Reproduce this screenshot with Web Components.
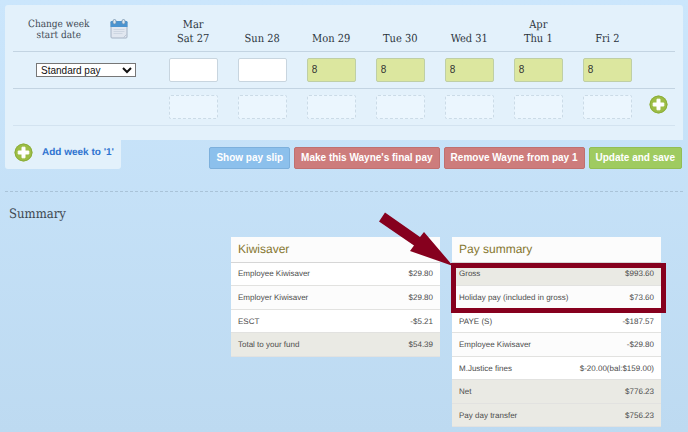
<!DOCTYPE html>
<html lang="en">
<head>
<meta charset="utf-8">
<title>Pay</title>
<style>
  html {
    min-height: 100%;
    background: linear-gradient(#cbe6fc, #bddaf1);
  }

  body {
    margin: 0;
    padding: 5px 5px 0;
    font-family: "Liberation Sans", Arial, sans-serif;
    color: #444;
    text-rendering: geometricPrecision;
  }
</style>
</head>
<body>
<pay-timesheet></pay-timesheet>
<pay-actions>
  <add-week slot="start" label="Add week to '1'"></add-week>
  <pay-button kind="blue">Show pay slip</pay-button>
  <pay-button kind="red">Make this Wayne's final pay</pay-button>
  <pay-button kind="red">Remove Wayne from pay 1</pay-button>
  <pay-button kind="green">Update and save</pay-button>
</pay-actions>
<pay-section heading="Summary">
  <summary-card id="kiwisaver" heading="Kiwisaver"></summary-card>
  <summary-card id="paysummary" heading="Pay summary">
    <call-out slot="note"></call-out>
  </summary-card>
</pay-section>

<script>
class PlusIcon extends HTMLElement {
  constructor() {
    super();
    this.attachShadow({ mode: "open" });
    this.shadowRoot.innerHTML = `
      <style>
        :host { display: block; width: 19px; height: 19px; }
        svg { display: block; width: 100%; height: 100%; }
      </style>
      <svg viewBox="0 0 19 19" aria-hidden="true">
        <circle cx="9.5" cy="9.5" r="9" fill="#9dbd45"/>
        <circle cx="9.5" cy="9.5" r="8.4" fill="none" stroke="#8bae3c" stroke-width="1"/>
        <path d="M8 4.2h3v3.8h3.8v3H11v3.8H8V11H4.2V8H8z" fill="#fff" stroke="#fff" stroke-width="1" stroke-linejoin="round"/>
      </svg>
    `;
  }
}

customElements.define("plus-icon", PlusIcon);

class CalendarIcon extends HTMLElement {
  constructor() {
    super();
    this.attachShadow({ mode: "open" });
    this.shadowRoot.innerHTML = `
      <style>
        :host { display: block; width: 18px; height: 20px; }
        svg { display: block; }
      </style>
      <svg width="18" height="20" viewBox="0 0 18 20" aria-hidden="true">
        <rect x="1" y="2.5" width="16" height="16.5" rx="1" fill="#e1e7f0" stroke="#a5b2c4"/>
        <path d="M.5 8V3.2q0-1.2 1.2-1.2h14.6q1.2 0 1.2 1.2V8z" fill="#4b93cf"/>
        <path d="M3.500 10.500h11M3.500 12.500h11M3.500 14.500h9" stroke="#cdd6e2" stroke-width="1"/>
        <path d="M13.500 18.500l3-3" stroke="#b4c0d0" stroke-width=".8"/>
        <rect x="3" y=".5" width="3" height="4.500" rx="1.500" fill="#dce8f2" stroke="#7390ab" stroke-width=".8"/>
        <rect x="12" y=".5" width="3" height="4.500" rx="1.500" fill="#dce8f2" stroke="#7390ab" stroke-width=".8"/>
      </svg>
    `;
  }
}

customElements.define("calendar-icon", CalendarIcon);

class PayTimesheet extends HTMLElement {
  constructor() {
    super();
    this.attachShadow({ mode: "open" });

    const days = [
      { month: "Mar", day: "Sat 27", hours: "" },
      { month: "", day: "Sun 28", hours: "" },
      { month: "", day: "Mon 29", hours: "8" },
      { month: "", day: "Tue 30", hours: "8" },
      { month: "", day: "Wed 31", hours: "8" },
      { month: "Apr", day: "Thu 1", hours: "8" },
      { month: "", day: "Fri 2", hours: "8" }
    ];

    this.shadowRoot.innerHTML = `
      <style>
        :host {
          display: block;
          padding: 0 8px 14px;
          background: #e3f1fb;
          border-radius: 3px 3px 0 0;
        }

        table {
          width: 100%;
          border-collapse: collapse;
          table-layout: fixed;
        }

        th, td {
          padding: 0;
          border-bottom: 1px solid #c3d4e2;
          text-align: center;
        }

        tr.last td { border-bottom-color: #d3e3f0; }
        thead tr { height: 46px; }
        tbody tr { height: 37px; }
        .first { width: 22%; }
        .last-col { width: 5%; }

        th {
          font: 11px/14px "DejaVu Serif Condensed", "DejaVu Serif", serif;
          color: #2b343c;
          vertical-align: bottom;
        }

        th.day { padding-bottom: 5px; }

        .change {
          display: flex;
          align-items: flex-start;
          gap: 20px;
          padding: 0 0 10px 15px;
          color: #3e4a54;
          font-size: 10px;
          line-height: 11px;
        }

        select {
          display: block;
          width: 100px;
          height: 14px;
          margin-left: 23px;
          padding: 0;
          border: 1px solid #767676;
          border-radius: 0;
          background: #fff;
          color: #111;
          font: 10px "Liberation Sans", Arial, sans-serif;
        }

        input {
          display: block;
          box-sizing: border-box;
          width: 49px;
          height: 24px;
          margin: 0 auto;
          padding: 0 4px;
          border: 1px solid #c8d5df;
          border-radius: 2px;
          background: #fff;
          color: #333;
          font: 10px "Liberation Sans", Arial, sans-serif;
        }

        input.filled {
          background: #dce79f;
          border-color: #bfcfa5;
        }

        input.spare {
          background: #ebf6fe;
          border: 1px dashed #cbdbe7;
        }

        button {
          display: block;
          margin: 0 auto;
          padding: 0 0 4px;
          border: 0;
          background: none;
        }
      </style>
      <table>
        <thead>
          <tr>
            <th class="first">
              <div class="change"><span>Change week<br>start date</span><calendar-icon></calendar-icon></div>
            </th>
            ${days.map(d => `<th class="day">${d.month ? d.month + "<br>" : ""}${d.day}</th>`).join("")}
            <th class="last-col"></th>
          </tr>
        </thead>
        <tbody>
          <tr>
            <td><select aria-label="Pay type"><option>Standard pay</option></select></td>
            ${days.map(d => `<td><input type="text" aria-label="${d.day} hours" value="${d.hours}" class="${d.hours ? "filled" : ""}"></td>`).join("")}
            <td></td>
          </tr>
          <tr class="last">
            <td></td>
            ${days.map(d => `<td><input type="text" aria-label="${d.day} extra" class="spare"></td>`).join("")}
            <td><button type="button" aria-label="Add row"><plus-icon></plus-icon></button></td>
          </tr>
        </tbody>
      </table>
    `;
  }
}

customElements.define("pay-timesheet", PayTimesheet);

class PayActions extends HTMLElement {
  constructor() {
    super();
    this.attachShadow({ mode: "open" });
    this.shadowRoot.innerHTML = `
      <style>
        :host {
          display: flex;
          justify-content: space-between;
          align-items: flex-end;
          padding-bottom: 22px;
          border-bottom: 1px dashed #a9c3d8;
        }

        .buttons {
          display: flex;
          gap: 4px;
          padding-right: 1px;
        }
      </style>
      <slot name="start"></slot>
      <div class="buttons"><slot></slot></div>
    `;
  }
}

customElements.define("pay-actions", PayActions);

class AddWeek extends HTMLElement {
  constructor() {
    super();
    this.attachShadow({ mode: "open" });
    this.shadowRoot.innerHTML = `
      <style>
        :host {
          display: block;
          background: #e3f1fb;
          border-radius: 0 0 3px 3px;
        }

        a {
          display: flex;
          align-items: center;
          gap: 9px;
          padding: 3px 7px 6px 9px;
          color: #2f74d0;
          font-size: 10px;
          font-weight: bold;
          line-height: 20px;
          text-decoration: none;
        }
      </style>
      <a href="#"><plus-icon></plus-icon><span></span></a>
    `;
  }

  connectedCallback() {
    this.shadowRoot.querySelector("span").textContent = this.getAttribute("label");
  }
}

customElements.define("add-week", AddWeek);

class PayButton extends HTMLElement {
  constructor() {
    super();
    this.attachShadow({ mode: "open" });
    this.shadowRoot.innerHTML = `
      <style>
        :host {
          display: block;
          --fill: #8cc0ec;
          --edge: #7db0dc;
        }

        :host([kind="red"]) { --fill: #cd7c7c; --edge: #bf7070; }
        :host([kind="green"]) { --fill: #9fcb60; --edge: #92be54; }

        button {
          display: block;
          height: 22px;
          padding: 0 6px;
          border: 1px solid var(--edge);
          border-radius: 2px;
          background: var(--fill);
          color: #fff;
          font: bold 10px "Liberation Sans", Arial, sans-serif;
          white-space: nowrap;
        }
      </style>
      <button type="button"><slot></slot></button>
    `;
  }
}

customElements.define("pay-button", PayButton);

class PaySection extends HTMLElement {
  constructor() {
    super();
    this.attachShadow({ mode: "open" });
    this.shadowRoot.innerHTML = `
      <style>
        :host { display: block; }

        h2 {
          margin: 0;
          padding: 14px 4px;
          color: #3e4850;
          font: 13px/17px "DejaVu Serif Condensed", "DejaVu Serif", serif;
        }

        .cards {
          display: flex;
          justify-content: flex-end;
          align-items: flex-start;
          gap: 12px;
          padding: 0 22px 6px 0;
        }
      </style>
      <h2></h2>
      <div class="cards"><slot></slot></div>
    `;
  }

  connectedCallback() {
    this.shadowRoot.querySelector("h2").textContent = this.getAttribute("heading");
  }
}

customElements.define("pay-section", PaySection);

class SummaryCard extends HTMLElement {
  constructor() {
    super();
    this.attachShadow({ mode: "open" });
    this.shadowRoot.innerHTML = `
      <style>
        :host {
          display: block;
          position: relative;
          width: 209px;
          background: #fff;
        }

        h3 {
          margin: 0;
          padding: 0 7px;
          border-bottom: 1px solid #d6d6d6;
          background: #fcfcfc;
          color: #86772f;
          font-size: 12px;
          font-weight: normal;
          line-height: 25px;
        }

        table {
          width: 100%;
          border-collapse: collapse;
          color: #4c4c4c;
          font-size: 8px;
        }

        tr { height: 23px; }
        tr:nth-child(even) { height: 24px; background: #fcfcfc; }
        tr.total, tr.total:nth-child(even) { background: #eaeae4; }

        th, td {
          border-bottom: 1px solid #e2e2e0;
          font-weight: normal;
          white-space: nowrap;
        }

        th {
          padding: 0 0 0 7px;
          text-align: left;
        }

        td {
          padding: 0 7px 0 0;
          text-align: right;
        }
      </style>
      <h3></h3>
      <table><tbody></tbody></table>
      <slot name="note"></slot>
    `;
  }

  connectedCallback() {
    this.shadowRoot.querySelector("h3").textContent = this.getAttribute("heading");
  }

  set rows(rows) {
    this.shadowRoot.querySelector("tbody").innerHTML = rows
      .map(([name, amount, total]) => `<tr class="${total ? "total" : ""}"><th scope="row">${name}</th><td>${amount}</td></tr>`)
      .join("");
  }
}

customElements.define("summary-card", SummaryCard);

// Arrow and frame that lie over the first two rows of a card
class CallOut extends HTMLElement {
  constructor() {
    super();
    this.attachShadow({ mode: "open" });
    this.shadowRoot.innerHTML = `
      <style>
        :host {
          position: absolute;
          top: 26px;
          left: -1px;
          right: -5px;
          height: 40px;
          border: 5px solid #86001e;
          pointer-events: none;
        }

        svg {
          position: absolute;
          right: 100%;
          bottom: 100%;
          margin: 0 3px 1px 0;
        }
      </style>
      <svg width="76" height="58" viewBox="376 210 76 58" aria-hidden="true">
        <path d="M384 213.500L419 238L423 233L452 267L409 252L413 246.500L378 222.500z" fill="#86001e"/>
      </svg>
    `;
  }
}

customElements.define("call-out", CallOut);

document.getElementById("kiwisaver").rows = [
  ["Employee Kiwisaver", "$29.80"],
  ["Employer Kiwisaver", "$29.80"],
  ["ESCT", "-$5.21"],
  ["Total to your fund", "$54.39", true]
];

document.getElementById("paysummary").rows = [
  ["Gross", "$993.60", true],
  ["Holiday pay (included in gross)", "$73.60"],
  ["PAYE (S)", "-$187.57"],
  ["Employee Kiwisaver", "-$29.80"],
  ["M.Justice fines", "$-20.00(bal:$159.00)"],
  ["Net", "$776.23", true],
  ["Pay day transfer", "$756.23", true]
];
</script>
</body>
</html>
